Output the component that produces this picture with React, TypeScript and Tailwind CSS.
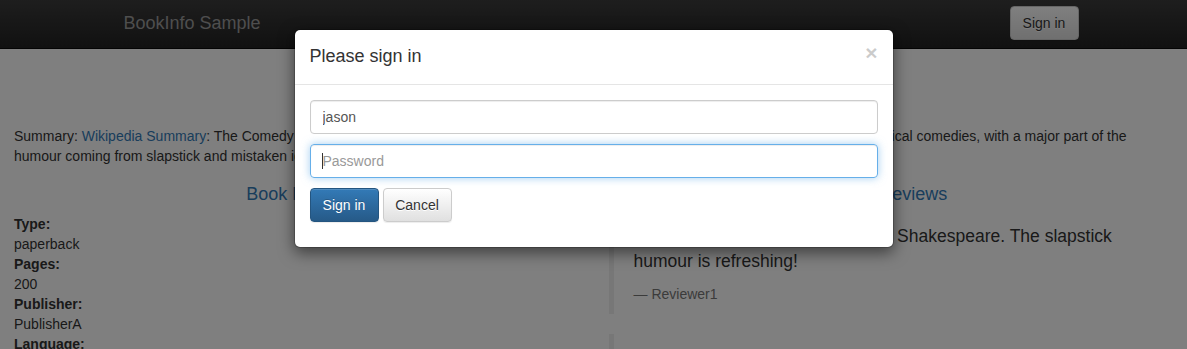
export default function App() {
  return (
    <div className="relative h-[349px] overflow-hidden bg-white font-['Liberation_Sans',Arial,sans-serif] text-[14px] leading-[20px] text-[#333]">
      <nav className="h-[49px] border-b border-[#080808] bg-linear-to-b from-[#3c3c3c] to-[#222]">
        <div className="mx-auto flex h-full w-[970px] items-start justify-between px-[15px]">
          <a className="pt-[13px] text-[18px] leading-[20px] text-[#9d9d9d]">BookInfo Sample</a>
          <button className="-mr-[15px] mt-[6px] h-[34px] w-[69px] rounded-[4px] border border-[#ccc] bg-linear-to-b from-white to-[#e0e0e0] text-[14px] text-[#333] shadow-[inset_0_1px_0_rgba(255,255,255,0.15),0_1px_1px_rgba(0,0,0,0.075)] [text-shadow:0_1px_0_#fff]">
            Sign in
          </button>
        </div>
      </nav>

      <div className="px-[15px]">
        <h3 className="mt-[40px] mb-[11px] text-center text-[24px] leading-[26px] text-[#337ab7]">The Comedy of Errors</h3>
        <p className="-ml-px">
          Summary: <a className="text-[#337ab7]">Wikipedia Summary</a>: The Comedy of Errors is one of <b>William Shakespeare's</b> early plays. It is his shortest and one of his most farcical comedies, with a major part of the humour coming from slapstick and mistaken identity, in addition to puns and word play.
        </p>
        <div className="-mx-[15px] flex">
          <div className="w-1/2 px-[15px]">
            <h4 className="mt-[18px] mb-[10px] text-center text-[18px] leading-[20px] text-[#337ab7]">Book Details</h4>
            <dl className="-ml-px">
              <dt className="font-bold">Type:</dt>
              <dd>paperback</dd>
              <dt className="font-bold">Pages:</dt>
              <dd>200</dd>
              <dt className="font-bold">Publisher:</dt>
              <dd>PublisherA</dd>
              <dt className="font-bold">Language:</dt>
              <dd>English</dd>
              <dt className="font-bold">ISBN-10:</dt>
              <dd>1234567890</dd>
              <dt className="font-bold">ISBN-13:</dt>
              <dd>123-1234567890</dd>
            </dl>
          </div>
          <div className="w-1/2 px-[15px]">
            <h4 className="mt-[18px] mb-[10px] text-center text-[18px] leading-[20px] text-[#337ab7]">Book Reviews</h4>
            <blockquote className="mb-[20px] border-l-[5px] border-[#eee] px-[20px] py-[10px] text-[17.5px] leading-[25px]">
              <p className="mb-[10px]">An extremely entertaining play by Shakespeare. The slapstick humour is refreshing!</p>
              <small className="block text-[14px] leading-[20px] text-[#777]">—&nbsp;Reviewer1</small>
            </blockquote>
            <blockquote className="mb-[20px] border-l-[5px] border-[#eee] px-[20px] py-[10px] text-[17.5px] leading-[25px]">
              <p className="mb-[10px]">Absolutely fun and entertaining. The play lacks thematic depth when compared to other plays by Shakespeare.</p>
              <small className="block text-[14px] leading-[20px] text-[#777]">—&nbsp;Reviewer2</small>
            </blockquote>
          </div>
        </div>
      </div>

      <div className="absolute inset-0 bg-black/50" />

      <div className="absolute inset-0 pt-[29px]">
        <div className="mx-auto w-[600px] rounded-[6px] border border-black/20 bg-white bg-clip-padding shadow-[0_5px_15px_rgba(0,0,0,0.5)]">
          <div className="flex items-start justify-between border-b border-[#e5e5e5] px-[15px] pt-[15px] pb-[17px]">
            <h4 className="text-[18px] leading-[22px] text-[#333]">Please sign in</h4>
            <button className="-mt-[3px] text-[21px] font-bold leading-[21px] text-black opacity-20 [text-shadow:0_1px_0_#fff]">×</button>
          </div>
          <div className="px-[15px] pt-[15px] pb-[25px]">
            <input
              readOnly
              value="jason"
              className="mb-[10px] block h-[34px] w-full rounded-[4px] border border-[#ccc] px-[12px] py-[6px] text-[14px] text-[#555] shadow-[inset_0_1px_1px_rgba(0,0,0,0.075)] outline-none"
            />
            <div className="relative mb-[10px]">
              <input
                readOnly
                placeholder="Password"
                className="block h-[34px] w-full rounded-[4px] border border-[#66afe9] px-[12px] py-[6px] text-[14px] text-[#555] shadow-[inset_0_1px_1px_rgba(0,0,0,0.075),0_0_8px_rgba(102,175,233,0.6)] outline-none placeholder:text-[#999]"
              />
              <span className="absolute left-[12px] top-[9px] h-[16px] w-px bg-[#333]" />
            </div>
            <div className="flex gap-[4px]">
              <button className="h-[34px] w-[69px] rounded-[4px] border border-[#245580] bg-linear-to-b from-[#337ab7] to-[#265a88] text-[14px] text-white shadow-[inset_0_1px_0_rgba(255,255,255,0.15),0_1px_1px_rgba(0,0,0,0.075)] [text-shadow:0_-1px_0_rgba(0,0,0,0.2)]">
                Sign in
              </button>
              <button className="h-[34px] w-[69px] rounded-[4px] border border-[#ccc] bg-linear-to-b from-white to-[#e0e0e0] text-[14px] text-[#333] shadow-[inset_0_1px_0_rgba(255,255,255,0.15),0_1px_1px_rgba(0,0,0,0.075)] [text-shadow:0_1px_0_#fff]">
                Cancel
              </button>
            </div>
          </div>
        </div>
      </div>
    </div>
  );
}
